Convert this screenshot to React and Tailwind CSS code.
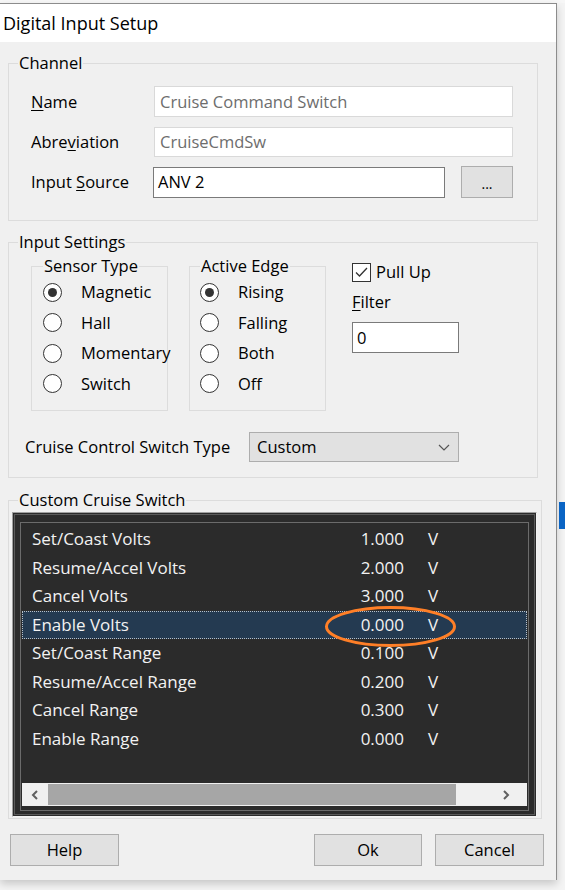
import React from 'react';

// Małe kontrolki w stylu Windows
const Radio = ({ checked, children }) => (
  <div className="flex items-center h-[30.5px]">
    <span className="w-[19px] h-[19px] rounded-full border-[1.5px] border-[#333] bg-white flex items-center justify-center shrink-0">
      {checked && <span className="w-[9px] h-[9px] rounded-full bg-[#333]" />}
    </span>
    <span className="ml-[19px] whitespace-nowrap">{children}</span>
  </div>
);

const Button = ({ className = '', children }) => (
  <div className={`h-[32px] bg-[#e1e1e1] border border-[#adadad] flex items-center justify-center ${className}`}>
    {children}
  </div>
);

const Chevron = ({ dir }) => (
  <svg width="8" height="10" viewBox="0 0 8 10" fill="none" stroke="#606060" strokeWidth="2">
    {dir === 'left' ? <polyline points="6,1 2,5 6,9" /> : <polyline points="2,1 6,5 2,9" />}
  </svg>
);

const rows = [
  ['Set/Coast Volts', '1.000'],
  ['Resume/Accel Volts', '2.000'],
  ['Cancel Volts', '3.000'],
  ['Enable Volts', '0.000', true],
  ['Set/Coast Range', '0.100'],
  ['Resume/Accel Range', '0.200'],
  ['Cancel Range', '0.300'],
  ['Enable Range', '0.000'],
];

export default function App() {
  return (
    <div className="w-[565px] h-[890px] overflow-hidden bg-[#f4f4f4] text-[16.5px] leading-[20px] text-black font-['Open_Sans',sans-serif]">
      <div className="h-[3px] bg-[#f7f7f7]" />
      <div className="flex">
        {/* okno dialogu */}
        <div className="w-[557px] border-t border-r border-[#8c8c8c] shadow-[0_4px_8px_rgba(0,0,0,0.18)]">
          <div className="h-[38px] bg-white flex items-center pl-[3px] text-[18px]">Digital Input Setup</div>

          <div className="bg-[#f0f0f0] pt-[11px] pb-[14px]">
            {/* Channel */}
            <fieldset className="ml-[8px] w-[530px] min-w-0 border border-[#dcdcdc] pl-[9px] pb-[22px]">
              <legend className="px-[1px]">Channel</legend>
              <div className="ml-[13px] mt-[13px] flex flex-col gap-[10px]">
                <div className="flex items-center">
                  <span className="w-[123px]"><span className="underline underline-offset-2">N</span>ame</span>
                  <div className="w-[359px] h-[31px] bg-white border border-[#d9d9d9] flex items-center pl-[5px] text-[#6d6d6d]">Cruise Command Switch</div>
                </div>
                <div className="flex items-center">
                  <span className="w-[123px]">Abre<span className="underline underline-offset-2">v</span>iation</span>
                  <div className="w-[359px] h-[30px] bg-white border border-[#d9d9d9] flex items-center pl-[5px] text-[#6d6d6d]">CruiseCmdSw</div>
                </div>
                <div className="flex items-center -mt-[1px]">
                  <span className="w-[122px] whitespace-nowrap">Input <span className="underline underline-offset-2">S</span>ource</span>
                  <div className="w-[292px] h-[31px] bg-white border border-[#7a7a7a] flex items-center pl-[4px]">ANV 2</div>
                  <Button className="ml-[16px] w-[52px] h-[28px] text-[14px] pt-[4px]">...</Button>
                </div>
              </div>
            </fieldset>

            {/* Input Settings */}
            <fieldset className="mt-[11px] ml-[8px] w-[530px] min-w-0 border border-[#dcdcdc] pl-[9px] pb-[15px]">
              <legend className="px-[1px]">Input Settings</legend>
              <div className="flex mt-[4px]">
                <fieldset className="ml-[13px] w-[137px] min-w-0 shrink-0 border border-[#dcdcdc] pl-[11px] pb-[11px]">
                  <legend className="px-[1px]">Sensor Type</legend>
                  <div className="pt-[1px]">
                    <Radio checked>Magnetic</Radio>
                    <Radio>Hall</Radio>
                    <Radio>Momentary</Radio>
                    <Radio>Switch</Radio>
                  </div>
                </fieldset>
                <fieldset className="ml-[21px] w-[137px] min-w-0 shrink-0 border border-[#dcdcdc] pl-[10px] pb-[11px]">
                  <legend className="px-[1px]">Active Edge</legend>
                  <div className="pt-[1px]">
                    <Radio checked>Rising</Radio>
                    <Radio>Falling</Radio>
                    <Radio>Both</Radio>
                    <Radio>Off</Radio>
                  </div>
                </fieldset>
                <div className="ml-[26px] pt-[6px] flex flex-col">
                  <div className="flex items-center">
                    <span className="w-[19px] h-[19px] border border-[#333] bg-white flex items-center justify-center">
                      <svg width="15" height="15" viewBox="0 0 15 15" fill="none" stroke="#333" strokeWidth="1.3">
                        <polyline points="2,7.5 5.5,11 13,3" />
                      </svg>
                    </span>
                    <span className="ml-[5px]">Pull Up</span>
                  </div>
                  <span className="mt-[10px]"><span className="underline underline-offset-2">F</span>ilter</span>
                  <div className="mt-[10px] w-[107px] h-[31px] bg-white border border-[#7a7a7a] flex items-center pl-[4px]">0</div>
                </div>
              </div>
              <div className="flex items-center mt-[21px] ml-[7px]">
                <span className="w-[224px] whitespace-nowrap">Cruise Control Switch Type</span>
                <div className="w-[210px] h-[30px] bg-[#e1e1e1] border border-[#adadad] flex items-center pl-[7px] pr-[8px]">
                  <span className="flex-1">Custom</span>
                  <svg width="12" height="7" viewBox="0 0 12 7" fill="none" stroke="#555" strokeWidth="1.2">
                    <polyline points="1,1 6,6 11,1" />
                  </svg>
                </div>
              </div>
            </fieldset>

            {/* Custom Cruise Switch */}
            <fieldset className="mt-[12px] ml-[8px] w-[534px] min-w-0 border border-[#dcdcdc] pl-[3px] pr-[4px] pb-[1px]">
              <legend className="ml-[6px] px-[1px]">Custom Cruise Switch</legend>
              <div className="mt-[2px] bg-[#2b2b2b] border border-t-[#a0a0a0] border-l-[#a0a0a0] border-r-[#f4f4f4] border-b-[#f4f4f4]">
                <div className="m-[1px] border border-[#5a5a5a] pt-[7px] pl-[5px] pr-[5px] pb-[3px]">
                  <div className="border border-[#6b6b6b] p-[1px] pb-[4px]">
                    <div className="h-[259px] pt-[1px] text-[17px] text-[#f2f2f2]">
                      {rows.map(([name, val, sel]) => (
                        <div
                          key={name}
                          className={`relative flex items-center h-[28.5px] ${sel ? 'bg-[#243a51] border border-dotted border-[#b8c0c8]' : 'border border-transparent'}`}
                        >
                          <span className="flex-1 pl-[9px]">{name}</span>
                          <span className="w-[80px] text-right">{val}</span>
                          <span className="w-[122px] pl-[24px]">V</span>
                          {sel && (
                            <svg className="absolute left-[301px] top-[-7px]" width="133" height="43" viewBox="0 0 133 43" fill="none">
                              <ellipse cx="66.5" cy="21.5" rx="64" ry="19" stroke="#ff7f27" strokeWidth="3" />
                            </svg>
                          )}
                        </div>
                      ))}
                    </div>
                    <div className="h-[23px] bg-[#f0f0f0] flex items-center">
                      <div className="w-[26px] flex justify-center"><Chevron dir="left" /></div>
                      <div className="w-[408px] h-[21px] bg-[#a6a6a6]" />
                      <div className="flex-1 flex justify-center pl-[28px]"><Chevron dir="right" /></div>
                    </div>
                  </div>
                </div>
              </div>
            </fieldset>

            {/* przyciski */}
            <div className="flex mt-[15px] px-[10px]">
              <Button className="w-[109px]">Help</Button>
              <Button className="ml-auto w-[108px]">Ok</Button>
              <Button className="ml-[13px] w-[109px] mr-[2px]">Cancel</Button>
            </div>
          </div>
        </div>

        {/* tło z prawej */}
        <div className="flex-1">
          <div className="mt-[499px] ml-[2px] h-[27px] bg-[#0a64c4]" />
        </div>
      </div>
    </div>
  );
}
